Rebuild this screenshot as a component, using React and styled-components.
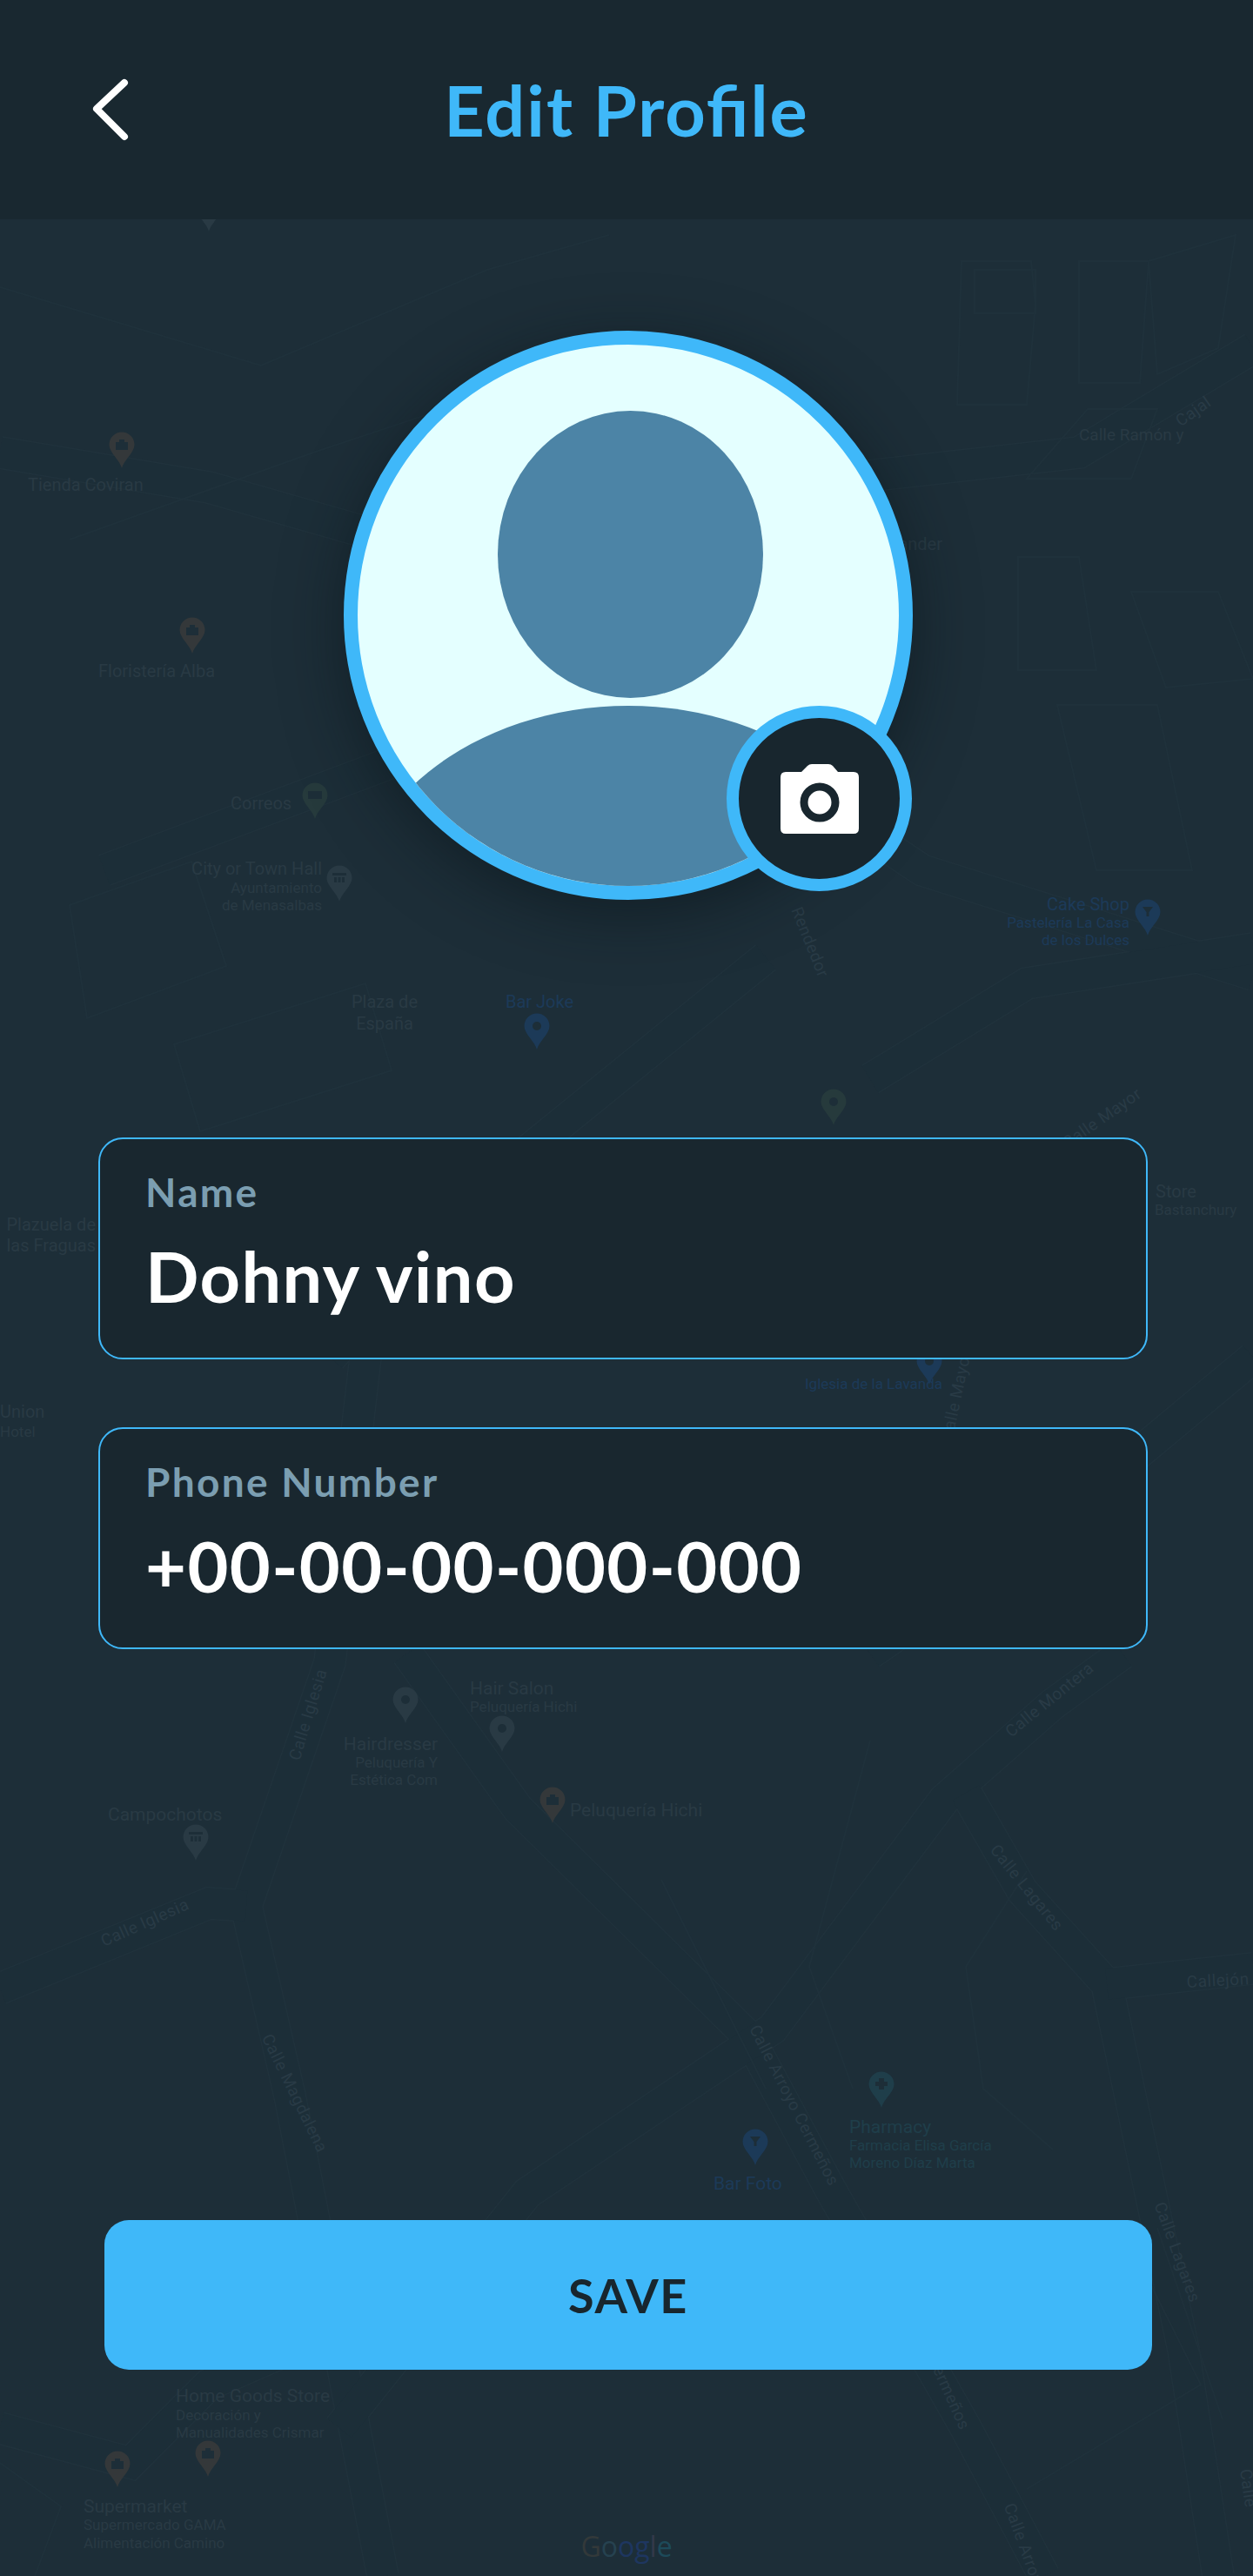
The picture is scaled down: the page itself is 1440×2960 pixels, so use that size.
import React from 'react';
import styled, { createGlobalStyle } from 'styled-components';

const GREY = '#293a44';
const BROWN = '#34383a';
const TEAL = '#1f3e4a';
const BLUE = '#1c3a58';
const GREEN = '#263a3c';

const roads = [
  'M420 1560 L379 1910 L283 2190 L333 2408 L390 2700 L440 2960',
  'M283 2190 L240 2187 L0 2285',
  'M468 1900 L595 2078 L860 2340 L955 2517 L1110 2790 L1200 2960',
  'M1290 1900 L1210 1958 L1085 2068 L888 2331 L606 2520 L390 2790',
  'M1110 2060 L1175 2173 L1272 2280 L1360 2700 L1400 2960',
  'M1272 2280 L1440 2262',
  'M0 2790 L150 2830 L240 2740 L560 2600',
  'M0 520 L240 560 L520 640 L760 800 L1060 1000 L1440 1120',
  'M120 1000 L440 880 L700 760',
  'M880 1100 L560 1360 L380 1560',
  'M1000 1240 L1180 1130 L1440 1090',
  'M880 560 L1240 520 L1440 400',
  'M1440 1560 L1200 1760 L1000 1900',
];

const thinRoads = [
  'M0 330 L300 420 L560 310 L700 270',
  'M80 620 L360 520 L720 400',
  'M1120 310 L1190 310 L1190 360 L1120 360 Z',
  'M1105 300 L1185 300 L1190 350 L1180 465 L1100 465 Z',
  'M1170 640 L1240 640 L1260 770 L1170 770 Z',
  'M1215 810 L1330 810 L1370 1000 L1260 1000 Z',
  'M1300 680 L1400 680 L1440 780 L1340 790 Z',
  'M1180 550 L1250 470 L1330 470 L1300 550 Z',
  'M1240 300 L1320 300 L1310 440 L1240 440 Z',
  'M1320 300 L1420 270 L1400 400 L1330 430 Z',
  'M80 1040 L220 990 L260 1110 L100 1170 Z',
  'M200 1200 L420 1130 L450 1230 L230 1300 Z',
  'M1000 2000 L930 2260 L980 2400',
  'M760 2160 L880 2400',
  'M1180 2150 L1110 2260 L1130 2400 L1210 2470',
  'M1320 2620 L1380 2740 L1180 2860',
  'M40 2960 L70 2880 L0 2830',
  'M1330 2560 L1405 2780',
];

const pins = [
  { x: 140, y: 517, color: BROWN, glyph: 'bag' },
  { x: 221, y: 730, color: BROWN, glyph: 'bag' },
  { x: 362, y: 920, color: GREEN, glyph: 'mail' },
  { x: 390, y: 1015, color: GREY, glyph: 'hall' },
  { x: 617, y: 1185, color: BLUE, glyph: 'dot' },
  { x: 1319, y: 1054, color: BLUE, glyph: 'fork' },
  { x: 958, y: 1272, color: GREEN, glyph: 'dot' },
  { x: 1068, y: 1570, color: BLUE, glyph: 'dot' },
  { x: 466, y: 1959, color: GREY, glyph: 'dot' },
  { x: 577, y: 1992, color: GREY, glyph: 'dot' },
  { x: 635, y: 2074, color: BROWN, glyph: 'bag' },
  { x: 225, y: 2117, color: GREY, glyph: 'hall' },
  { x: 1013, y: 2401, color: TEAL, glyph: 'cross' },
  { x: 868, y: 2467, color: BLUE, glyph: 'fork' },
  { x: 239, y: 2825, color: BROWN, glyph: 'bag' },
  { x: 135, y: 2837, color: BROWN, glyph: 'bag' },
  { x: 240, y: 245, color: GREY, glyph: 'dot' },
];

const labels = [
  { x: 32, y: 564, text: 'Tienda Coviran', size: 20 },
  { x: 113, y: 778, text: 'Floristería Alba', size: 20 },
  { x: 265, y: 930, text: 'Correos', size: 20 },
  { x: 370, y: 1005, text: 'City or Town Hall', size: 20, end: true },
  { x: 370, y: 1026, text: 'Ayuntamiento', size: 17, end: true },
  { x: 370, y: 1046, text: 'de Menasalbas', size: 17, end: true },
  { x: 442, y: 1158, text: 'Plaza de', size: 20, middle: true },
  { x: 442, y: 1183, text: 'España', size: 20, middle: true },
  { x: 581, y: 1158, text: 'Bar Joke', size: 20, color: BLUE },
  { x: 1083, y: 632, text: 'Santander', size: 20, end: true },
  { x: 1240, y: 506, text: 'Calle Ramón y', size: 19 },
  { x: 1298, y: 1046, text: 'Cake Shop', size: 20, end: true, color: BLUE },
  { x: 1298, y: 1066, text: 'Pastelería La Casa', size: 17, end: true, color: BLUE },
  { x: 1298, y: 1086, text: 'de los Dulces', size: 17, end: true, color: BLUE },
  { x: 1328, y: 1376, text: 'Store', size: 20 },
  { x: 1327, y: 1396, text: 'Bastanchury', size: 17 },
  { x: 110, y: 1414, text: 'Plazuela de', size: 20, end: true },
  { x: 110, y: 1438, text: 'las Fraguas', size: 20, end: true },
  { x: 0, y: 1629, text: 'Union', size: 20 },
  { x: 0, y: 1651, text: 'Hotel', size: 17 },
  { x: 925, y: 1596, text: 'Iglesia de la Lavanda', size: 17, color: BLUE },
  { x: 540, y: 1947, text: 'Hair Salon', size: 21 },
  { x: 540, y: 1967, text: 'Peluquería Hichi', size: 17 },
  { x: 503, y: 2011, text: 'Hairdresser', size: 21, end: true },
  { x: 503, y: 2031, text: 'Peluquería Y', size: 17, end: true },
  { x: 503, y: 2051, text: 'Estética Com', size: 17, end: true },
  { x: 655, y: 2087, text: 'Peluquería Hichi', size: 21 },
  { x: 124, y: 2092, text: 'Campochotos', size: 21 },
  { x: 976, y: 2451, text: 'Pharmacy', size: 21, color: TEAL },
  { x: 976, y: 2471, text: 'Farmacia Elisa García', size: 17, color: TEAL },
  { x: 976, y: 2491, text: 'Moreno Díaz Marta', size: 17, color: TEAL },
  { x: 820, y: 2516, text: 'Bar Foto', size: 21, color: BLUE },
  { x: 202, y: 2760, text: 'Home Goods Store', size: 21 },
  { x: 202, y: 2781, text: 'Decoración y', size: 17 },
  { x: 202, y: 2801, text: 'Manualidades Crismar', size: 17 },
  { x: 96, y: 2887, text: 'Supermarket', size: 21 },
  { x: 96, y: 2907, text: 'Supermercado GAMA', size: 17 },
  { x: 96, y: 2928, text: 'Alimentación Camino', size: 17 },
];

const streets = [
  { x: 360, y: 1972, angle: -73, text: 'Calle Iglesia' },
  { x: 169, y: 2215, angle: -24, text: 'Calle Iglesia' },
  { x: 333, y: 2408, angle: 64, text: 'Calle Magdalena' },
  { x: 1210, y: 1958, angle: -39, text: 'Calle Montera' },
  { x: 1175, y: 2173, angle: 51, text: 'Calle Lagares' },
  { x: 1400, y: 2282, angle: -3, text: 'Callejón' },
  { x: 907, y: 2422, angle: 63, text: 'Calle Arroyo Cermeños' },
  { x: 1347, y: 2590, angle: 70, text: 'Calle Lagares' },
  { x: 1085, y: 2752, angle: 66, text: 'Cermeños' },
  { x: 1172, y: 2930, angle: 70, text: 'Calle Arroyo' },
  { x: 1428, y: 2860, angle: 82, text: 'Calle' },
  { x: 925, y: 1085, angle: 68, text: 'Rendedor' },
  { x: 1270, y: 1290, angle: -35, text: 'Calle Mayor' },
  { x: 1105, y: 1605, angle: -78, text: 'Calle Mayor' },
  { x: 1375, y: 478, angle: -35, text: 'Cajal' },
];

const GlobalStyle = createGlobalStyle`
  html, body {
    margin: 0;
    padding: 0;
    background: #1d2e38;
  }
`;

const Page = styled.div`
  position: relative;
  width: 1440px;
  height: 2960px;
  overflow: hidden;
  background: #1d2e38;
  font-family: Lato, "Noto Sans", sans-serif;
`;

const MapLayer = styled.svg`
  position: absolute;
  top: 0;
  left: 0;
`;

const RoadEdge = styled.path`
  fill: none;
  stroke: #20323c;
  stroke-width: 38;
`;

const RoadFill = styled.path`
  fill: none;
  stroke: #1c2e38;
  stroke-width: 35;
`;

const ThinRoad = styled.path`
  fill: none;
  stroke: #1f313b;
  stroke-width: 2;
`;

const MapLabel = styled.text`
  font-family: Roboto, sans-serif;
  font-size: ${(p) => p.$size}px;
  fill: ${(p) => p.$color || GREY};
  text-anchor: ${(p) => (p.$end ? 'end' : p.$middle ? 'middle' : 'start')};
`;

const StreetLabel = styled.text`
  font-family: Roboto, sans-serif;
  font-size: 19px;
  letter-spacing: 0.5px;
  fill: #293b46;
  text-anchor: middle;
`;

const GoogleMark = styled.text`
  font-family: "Open Sans", sans-serif;
  font-size: 32px;
  text-anchor: middle;
`;

const Content = styled.div`
  position: relative;
  display: flex;
  flex-direction: column;
`;

const Header = styled.header`
  display: grid;
  grid-template-columns: 1fr auto 1fr;
  align-items: center;
  height: 252px;
  padding-left: 104px;
  background: #192830;
`;

const BackButton = styled.button`
  display: flex;
  width: 48px;
  padding: 0;
  border: 0;
  background: none;
`;

const Title = styled.h1`
  margin: 0 0 0 -104px;
  font-size: 81px;
  font-weight: 700;
  line-height: 96px;
  letter-spacing: 2px;
  font-feature-settings: "liga" 1;
  color: #3fb8f9;
`;

const AvatarRow = styled.div`
  display: flex;
  padding: 128px 0 0 395px;
`;

const Avatar = styled.div`
  position: relative;
  width: 654px;
  height: 654px;
`;

const AvatarCircle = styled.div`
  box-sizing: border-box;
  width: 100%;
  height: 100%;
  border: 16px solid #3fb8f9;
  border-radius: 50%;
  overflow: hidden;
  background: #e4ffff;
  box-shadow: 0 16px 70px rgba(10, 20, 26, 0.55);
`;

const Silhouette = styled.svg`
  display: block;
`;

const CameraBadge = styled.button`
  position: absolute;
  left: 440px;
  top: 431px;
  box-sizing: border-box;
  display: flex;
  align-items: center;
  justify-content: center;
  width: 213px;
  height: 213px;
  padding: 0;
  border: 14px solid #3fb8f9;
  border-radius: 50%;
  background: #18262e;
`;

const Form = styled.form`
  display: flex;
  flex-direction: column;
  gap: 78px;
  width: 1206px;
  margin: 273px 0 0 113px;
`;

const Field = styled.div`
  box-sizing: border-box;
  display: flex;
  flex-direction: column;
  height: 255px;
  padding: 33px 52px 0;
  border: 2px solid #3fb8f9;
  border-radius: 28px;
  background: #19272f;
`;

const FieldLabel = styled.span`
  font-size: 46px;
  font-weight: 700;
  line-height: 56px;
  letter-spacing: 2.3px;
  color: #7b9eb1;
`;

const FieldValue = styled.span`
  margin-top: 20px;
  font-size: 81px;
  font-weight: 700;
  line-height: 96px;
  letter-spacing: 1.4px;
  color: #ffffff;
`;

const SaveButton = styled.button`
  width: 1204px;
  height: 172px;
  margin: 656px 0 0 120px;
  padding: 0;
  border: 0;
  border-radius: 28px;
  background: #3fb8f9;
  font-family: inherit;
  font-size: 54px;
  font-weight: 700;
  letter-spacing: 1.5px;
  color: #18262e;
`;

const PinGlyph = ({ kind }) => {
  if (kind === 'dot') return <circle cx="0" cy="-6" r="5" fill="#1d2e38" />;
  if (kind === 'bag') return <path d="M-7 -9 H7 V0 H-7 Z M-3 -9 V-12 H3 V-9" fill="#1d2e38" />;
  if (kind === 'mail') return <path d="M-8 -11 H8 V-2 H-8 Z" fill="#1d2e38" />;
  if (kind === 'hall') return <path d="M-8 -12 H8 V-9 H-8 Z M-6 -7 H-3 V-1 H-6 Z M-1.5 -7 H1.5 V-1 H-1.5 Z M3 -7 H6 V-1 H3 Z" fill="#1d2e38" />;
  if (kind === 'fork') return <path d="M-6 -12 H6 L1.5 -6 V-1 H-1.5 V-6 Z" fill="#1d2e38" />;
  return <path d="M-3 -13 H3 V-9 H7 V-4 H3 V0 H-3 V-4 H-7 V-9 H-3 Z" fill="#1d2e38" />;
};

const MapPin = ({ x, y, color, glyph }) => (
  <g transform={`translate(${x} ${y})`}>
    <path
      d="M0 21 C-2 12 -14.5 3 -14.5 -6 A14.5 14.5 0 1 1 14.5 -6 C14.5 3 2 12 0 21 Z"
      fill={color}
    />
    <PinGlyph kind={glyph} />
  </g>
);

const MapBackground = () => (
  <MapLayer width="1440" height="2960" viewBox="0 0 1440 2960">
    {roads.map((d) => <RoadEdge key={d} d={d} />)}
    {roads.map((d) => <RoadFill key={d} d={d} />)}
    {thinRoads.map((d) => <ThinRoad key={d} d={d} />)}
    {pins.map((pin) => <MapPin key={`${pin.x}-${pin.y}`} {...pin} />)}
    {labels.map((l) => (
      <MapLabel
        key={`${l.x}-${l.y}`}
        x={l.x}
        y={l.y}
        $size={l.size}
        $end={l.end}
        $middle={l.middle}
        $color={l.color}
      >
        {l.text}
      </MapLabel>
    ))}
    {streets.map((s) => (
      <StreetLabel
        key={`${s.x}-${s.y}`}
        transform={`translate(${s.x} ${s.y}) rotate(${s.angle})`}
      >
        {s.text}
      </StreetLabel>
    ))}
    <GoogleMark x="720" y="2938">
      <tspan fill="#33393a">G</tspan>
      <tspan fill="#264250">o</tspan>
      <tspan fill="#1e3660">o</tspan>
      <tspan fill="#1e3660">g</tspan>
      <tspan fill="#33394a">l</tspan>
      <tspan fill="#1d4a5a">e</tspan>
    </GoogleMark>
  </MapLayer>
);

const App = () => (
  <Page>
    <GlobalStyle />
    <MapBackground />
    <Content>
      <Header>
        <BackButton type="button" aria-label="Back">
          <svg width="48" height="72" viewBox="0 0 48 72" fill="none">
            <polyline
              points="39,5 7,35 39,67"
              stroke="#ffffff"
              strokeWidth="8"
              strokeLinecap="round"
              strokeLinejoin="round"
            />
          </svg>
        </BackButton>
        <Title>Edit Profile</Title>
      </Header>
      <AvatarRow>
        <Avatar>
          <AvatarCircle>
            <Silhouette width="622" height="622" viewBox="0 0 622 622">
              <ellipse cx="313.5" cy="241" rx="152.5" ry="165" fill="#4c84a6" />
              <ellipse cx="311" cy="675" rx="325" ry="260" fill="#4c84a6" />
            </Silhouette>
          </AvatarCircle>
          <CameraBadge type="button" aria-label="Change photo">
            <svg width="90" height="80" viewBox="0 0 90 80">
              <path
                d="M6 9 H24 L31 2 Q33 0 36 0 H55 Q58 0 60 2 L66 9 H84 Q90 9 90 15 V74 Q90 80 84 80 H6 Q0 80 0 74 V15 Q0 9 6 9 Z"
                fill="#ffffff"
              />
              <circle cx="45" cy="44" r="18" fill="#ffffff" stroke="#18262e" strokeWidth="9" />
            </svg>
          </CameraBadge>
        </Avatar>
      </AvatarRow>
      <Form>
        <Field>
          <FieldLabel>Name</FieldLabel>
          <FieldValue>Dohny vino</FieldValue>
        </Field>
        <Field>
          <FieldLabel>Phone Number</FieldLabel>
          <FieldValue>+00-00-00-000-000</FieldValue>
        </Field>
      </Form>
      <SaveButton type="button">SAVE</SaveButton>
    </Content>
  </Page>
);

export default App;
